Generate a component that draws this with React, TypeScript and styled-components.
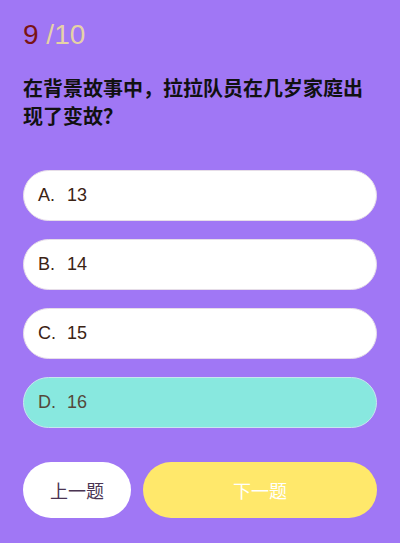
import * as React from 'react'
import styled, { createGlobalStyle } from 'styled-components'

const GlobalStyle = createGlobalStyle`
    html, body {
        margin: 0;
        padding: 0;
        background: #a077f5;
    }
    * {
        box-sizing: border-box;
    }
`

const Page = styled.div`
    width: 400px;
    height: 543px;
    padding: 18px 23px 0 23px;
    background: #a077f5;
    font-family: 'Liberation Sans', Arial, 'Noto Sans CJK SC', sans-serif;
    display: flex;
    flex-direction: column;
`

const Counter = styled.div`
    font-size: 28px;
    line-height: 34px;
    color: #e6d2a6;
`

const Current = styled.span`
    color: #7a1414;
`

const Question = styled.div`
    margin-top: 22px;
    font-size: 20px;
    line-height: 28px;
    font-weight: 700;
    color: #111;
    font-family: 'Noto Sans CJK SC', sans-serif;
`

const Options = styled.div`
    margin-top: 40px;
    display: flex;
    flex-direction: column;
    gap: 18px;
`

const Option = styled.div<{ $selected?: boolean }>`
    height: 51px;
    border-radius: 26px;
    background: ${p => (p.$selected ? '#88e8df' : '#ffffff')};
    border: 1px solid ${p => (p.$selected ? '#c8e6ee' : '#e6dde8')};
    display: flex;
    align-items: center;
    padding-left: 14px;
    font-size: 18px;
    color: ${p => (p.$selected ? '#55473a' : '#3b2314')};
`

const Letter = styled.span`
    width: 29px;
`

const Footer = styled.div`
    margin-top: 34px;
    display: flex;
    gap: 12px;
`

const NavButton = styled.button<{ $primary?: boolean }>`
    height: 56px;
    border-radius: 28px;
    border: none;
    flex: ${p => (p.$primary ? 1 : '0 0 108px')};
    background: ${p => (p.$primary ? '#ffe86b' : '#ffffff')};
    color: ${p => (p.$primary ? '#ffffff' : '#4a3452')};
    font-size: 18px;
    font-family: 'Noto Sans CJK SC', sans-serif;
    cursor: pointer;
`

const options = [
    { key: 'A', value: '13' },
    { key: 'B', value: '14' },
    { key: 'C', value: '15' },
    { key: 'D', value: '16' },
]

export default function App() {
    const [selected, setSelected] = React.useState('D')

    return (
        <Page>
            <GlobalStyle />
            <Counter>
                <Current>9</Current> /10
            </Counter>
            <Question>在背景故事中，拉拉队员在几岁家庭出现了变故？</Question>
            <Options>
                {options.map(o => (
                    <Option key={o.key} $selected={selected === o.key} onClick={() => setSelected(o.key)}>
                        <Letter>{o.key}.</Letter>
                        {o.value}
                    </Option>
                ))}
            </Options>
            <Footer>
                <NavButton>上一题</NavButton>
                <NavButton $primary>下一题</NavButton>
            </Footer>
        </Page>
    )
}
